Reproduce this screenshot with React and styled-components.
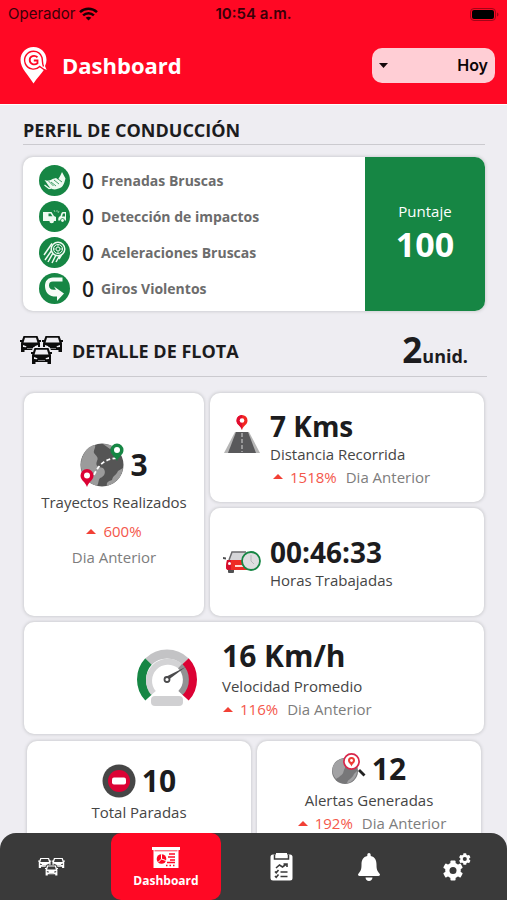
import React from "react";
import styled, { createGlobalStyle } from "styled-components";

const GlobalStyle = createGlobalStyle`
  *, *::before, *::after { box-sizing: border-box; }
  body {
    margin: 0;
    background: #eeedf2;
    color: #1c1c1e;
    font-family: "Open Sans", "Noto Sans", sans-serif;
  }
  h1, h2, p, ul { margin: 0; padding: 0; }
  ul { list-style: none; }
  svg { display: block; flex: none; }
`;

const red = "#ff0824";
const green = "#168644";
const crimson = "#dc0234";

const Page = styled.div`
  display: flex;
  flex-direction: column;
  height: 100vh;
`;

const Header = styled.header`
  flex: none;
  background: ${red};
  border-bottom: 1px solid #ffffff;
`;

const StatusBar = styled.div`
  display: grid;
  grid-template-columns: 1fr auto 1fr;
  align-items: center;
  height: 28px;
  padding: 0 8px;
  font: 400 15px/20px Inter, sans-serif;
  color: #3a0008;
`;

const Carrier = styled.span`
  display: flex;
  align-items: center;
  gap: 4px;
`;

const Clock = styled.time`
  font-weight: 600;
`;

const BatterySlot = styled.span`
  justify-self: end;
`;

const TitleBar = styled.div`
  display: flex;
  align-items: center;
  height: 76px;
  padding: 0 12px 2px 20px;
`;

const PageTitle = styled.h1`
  flex: 1;
  margin-left: 14px;
  font-size: 22px;
  line-height: 30px;
  font-weight: 700;
  color: #ffffff;
`;

const PeriodField = styled.label`
  display: flex;
  align-items: center;
  width: 123px;
  height: 35px;
  padding: 0 7px;
  border-radius: 10px;
  background: #ffced5;
`;

const PeriodSelect = styled.select`
  flex: 1;
  min-width: 0;
  height: 35px;
  padding: 0;
  border: 0;
  appearance: none;
  background: transparent;
  color: #0c0406;
  font: 600 16px/22px Inter, sans-serif;
  text-align-last: right;
`;

const Main = styled.main`
  flex: 1;
  min-height: 0;
  margin-bottom: -16px;
  padding: 10px 22px 16px 23px;
  overflow-y: auto;
  scrollbar-width: none;
`;

const SectionHead = styled.div`
  display: flex;
  align-items: center;
  height: ${(p) => (p.$tall ? 54 : 30)}px;
  margin: ${(p) => (p.$tall ? "12px -2px 16px -3px" : "0 0 12px")};
  padding-top: ${(p) => (p.$tall ? 2 : 0)}px;
  border-bottom: 1px solid #cbcacf;
`;

const SectionTitle = styled.h2`
  flex: 1;
  margin-left: ${(p) => (p.$indent ? 9 : 0)}px;
  font-size: 18px;
  line-height: 24px;
  font-weight: 700;
`;

const UnitCount = styled.p`
  margin-right: 19px;
  padding-top: 5px;
  font-size: 18px;
  line-height: 44px;
  font-weight: 700;
`;

const UnitNumber = styled.strong`
  font-size: 35px;
  font-weight: 700;
`;

const Card = styled.article`
  border-radius: 10px;
  background: #ffffff;
  box-shadow: 0 0 3px 1px #d0d0d4;
`;

const ProfileCard = styled(Card)`
  display: flex;
  overflow: hidden;
`;

const EventList = styled.ul`
  flex: 1;
  display: flex;
  flex-direction: column;
  gap: 5px;
  padding: 8px 16px 7px;
`;

const EventRow = styled.li`
  display: flex;
  align-items: center;
  height: 31px;
`;

const EventCount = styled.strong`
  width: 19px;
  margin-left: 12px;
  font-size: 21px;
  line-height: 28px;
  font-weight: 600;
`;

const EventName = styled.span`
  font-size: 14px;
  line-height: 20px;
  font-weight: 700;
  color: #6c6c6c;
`;

const Score = styled.div`
  display: flex;
  flex-direction: column;
  justify-content: center;
  align-items: center;
  width: 120px;
  background: ${green};
  color: #ffffff;
`;

const ScoreLabel = styled.span`
  font-size: 15px;
  line-height: 20px;
`;

const ScoreValue = styled.strong`
  font-size: 34px;
  line-height: 46px;
  font-weight: 700;
`;

const MetricGrid = styled.section`
  display: grid;
  grid-template-columns: 180fr 274fr;
  grid-template-rows: 109px 108px 112px;
  gap: 6px;
  margin: 0 1px;
`;

const TallCard = styled(Card)`
  grid-row: span 2;
  display: flex;
  flex-direction: column;
  align-items: center;
  gap: 4px;
  padding-top: 50px;
`;

const SideCard = styled(Card)`
  display: flex;
  align-items: center;
  gap: ${(p) => (p.$wide ? 24 : 9)}px;
  grid-column: ${(p) => (p.$wide ? "1 / -1" : "auto")};
  padding-left: ${(p) => (p.$wide ? 112 : 13)}px;
`;

const RaisedIcon = styled.div`
  align-self: flex-start;
  padding-top: 22px;
`;

const MetricText = styled.div`
  padding-top: 1px;
`;

const BottomCards = styled.section`
  display: grid;
  grid-template-columns: 1fr 1fr;
  gap: 6px;
  margin: 7px 4px 0;
`;

const SmallCard = styled(Card)`
  display: flex;
  flex-direction: column;
  align-items: center;
  min-height: 112px;
  padding-top: ${(p) => (p.$lower ? 20 : 8)}px;
`;

const IconValue = styled.div`
  display: flex;
  align-items: center;
  gap: 6px;
  min-height: 40px;
`;

const Value = styled.strong`
  display: block;
  font-size: ${(p) => (p.$small ? 28 : 30)}px;
  line-height: ${(p) => (p.$small ? 34 : 38)}px;
  font-weight: 700;
`;

const Label = styled.p`
  font-size: 15px;
  line-height: 22px;
  color: #454545;
`;

const Trend = styled.p`
  display: flex;
  flex-direction: ${(p) => (p.$stacked ? "column" : "row")};
  align-items: center;
  gap: ${(p) => (p.$stacked ? 4 : 9)}px;
  margin-top: ${(p) => (p.$stacked ? 3 : 1)}px;
  padding-left: ${(p) => p.$inset || 0}px;
  font-size: 15px;
  line-height: 22px;
  color: #7d7d7d;
`;

const Change = styled.span`
  display: flex;
  align-items: center;
  gap: 7px;
  color: #f4574b;
`;

const Nav = styled.nav`
  position: relative;
  flex: none;
  display: flex;
  height: 67px;
  padding: 0 6px 0 7px;
  border-radius: 16px 16px 0 0;
  background: #3a3a3a;
`;

const NavButton = styled.button`
  flex: ${(p) => (p.$active ? "0 0 110px" : "1 1 0")};
  display: flex;
  flex-direction: column;
  align-items: center;
  justify-content: center;
  gap: 3px;
  margin: ${(p) => (p.$active ? "0 16px" : "0")};
  padding: ${(p) => (p.$active ? 4 : 0)}px 0 0;
  border: 0;
  border-radius: 10px;
  background: ${(p) => (p.$active ? red : "transparent")};
  color: #ffffff;
  font: 700 12px/18px "Open Sans", "Noto Sans", sans-serif;
`;

const WifiIcon = () => (
  <svg width="19" height="14" viewBox="0 0 19 14" aria-hidden="true" fill="none" stroke="#180004" strokeWidth="2.5">
    <path d="M1 5.2C5.8.7 13.2.7 18 5.2" />
    <path d="M4.1 8.4c3.1-2.9 7.7-2.9 10.8 0" />
    <path d="M9.5 13.5 6.7 10.7c1.6-1.4 4-1.4 5.6 0Z" fill="#180004" stroke="none" />
  </svg>
);

const BatteryIcon = () => (
  <svg width="29" height="13" viewBox="0 0 29 13" aria-hidden="true">
    <rect x=".5" y=".5" width="25" height="12" rx="3.5" fill="none" stroke="#a10517" />
    <rect x="2" y="2" width="22" height="9" rx="2" fill="#000000" />
    <path d="M27 4.5v4c2-.8 2-3.2 0-4Z" fill="#a10517" />
  </svg>
);

const LogoIcon = () => (
  <svg width="28" height="37" viewBox="0 0 28 37" aria-hidden="true">
    <path d="M13.500 0C6 0 .5 5.600.5 13c0 8.500 8 15 13 23.500C17 31 21.500 27 24.500 22L27 24l-2-5c1-2 1.500-4 1.500-6C26.500 5.600 21 0 13.500 0Z" fill="#ffffff" />
    <path d="M23.500 19.500C22 16 22.800 14.500 22 10.500 20.800 7 17.500 4.300 13.500 4.300a8.900 8.900 0 1 0 6.300 15.200c2.500 2 4.200 3.500 7.200 4.500" fill="none" stroke={red} strokeWidth="1.400" />
    <path d="M17.500 10.300C14.500 7.800 9.700 9 9.700 13s4.800 5.700 7.800 3.200v-2.700h-3.700" fill="none" stroke={red} strokeWidth="1.800" />
  </svg>
);

const DownArrow = () => (
  <svg width="9" height="5" viewBox="0 0 9 5" aria-hidden="true">
    <path d="M0 0h9L4.500 5Z" fill="#14080a" />
  </svg>
);

const UpArrow = () => (
  <svg width="10" height="5" viewBox="0 0 10 5" aria-hidden="true">
    <path d="M0 5h10L5 0Z" fill="#f24035" />
  </svg>
);

const Disc = ({ children }) => (
  <svg width="31" height="31" viewBox="0 0 31 31" aria-hidden="true">
    <circle cx="15.500" cy="15.500" r="15.500" fill={green} />
    {children}
  </svg>
);

const BrakeIcon = () => (
  <Disc>
    <path d="M5.500 15c3 1.500 5.500.5 8-1l3.500-1 2 1.500c1.500-2.500 2.500-4 4-7.500l3.500 6.500c-1 3-1.500 7-4.500 9-3 1.500-6 2.500-9 1.500-2-1-2.500-2-7.500-9Z" fill="#effaf1" />
    <path d="m12 17 5 4m-2-6 5 4m-1-5 4 3M9.500 16l5 5" stroke={green} strokeWidth=".8" fill="none" />
    <path d="m5.500 20 4.500 3.500 2-.5" stroke="#effaf1" strokeWidth="1.300" fill="none" />
  </Disc>
);

const ImpactIcon = () => (
  <Disc>
    <path d="M4 11h8.500l2.500 4 2 1v4h-2a2.300 2.300 0 0 1-4.600 0H4Z" fill="#effaf1" />
    <path d="M9.500 12.500h2.200l1.700 2.800H9.500Z" fill={green} />
    <path d="M27 11h-3c-1.500 0-2 2-2.500 4-1.500.5-2.300 1.500-2.300 4.500h2a2.300 2.300 0 0 1 4.600 0H27Z" fill="#effaf1" />
    <path d="M26 12.500h-2l-1 3h3Z" fill={green} />
    <circle cx="12.700" cy="19.700" r="1.500" fill="#effaf1" />
    <circle cx="23.500" cy="19.500" r="1.400" fill="#effaf1" />
    <path d="m15 9 1 2m2-2v2m2-1-1 2" stroke="#8bc9a0" />
  </Disc>
);

const AccelerationIcon = () => (
  <Disc>
    <path d="M13 6.500 5 18m8-5L6 23m8-7-5 9m8-7-4 8m8-8-4 7m8-11-5 8" stroke="#effaf1" strokeWidth="1.500" fill="none" />
    <circle cx="19" cy="12" r="6.800" fill={green} stroke="#effaf1" strokeWidth="1.500" />
    <circle cx="19" cy="12" r="4.500" fill="none" stroke="#effaf1" strokeWidth="1" />
    <circle cx="19" cy="12" r="2" fill="none" stroke="#effaf1" strokeWidth="1" />
    <path d="M19 7.500v2m0 5v2M14.500 12h2m5 0h2" stroke="#effaf1" strokeWidth=".8" />
  </Disc>
);

const TurnIcon = () => (
  <Disc>
    <path d="M23.500 4.500v4H14c-3 0-4 1.500-4 4s1.500 4.300 4.500 4.300H17L15 13.500l10 7-7 7.500v-4.500h-3.500C9 23 6 18 6 13c0-5 3-8.500 8-8.500Z" fill="#f6fcf7" />
  </Disc>
);

const CarFront = ({ x, y, fill, line }) => (
  <g transform={`translate(${x} ${y})`}>
    <path d="M4 0h14l2.500 7v9h-3.500v-2H5v2H1.500V7Z" fill={fill} />
    <path d="M5.500 1.700h11L18 6.500H4Z" fill={line} />
    <path d="M.5 5h2.500M19 5h2.500" stroke={fill} strokeWidth="1.800" />
    <path d="M3.500 9 7 10.300l-.5 1-3-.4Zm15 0L15 10.300l.5 1 3-.4ZM7.500 12h7v.6h-7Z" fill={line} />
  </g>
);

const FleetIcon = ({ width, height, fill, line }) => (
  <svg width={width} height={height} viewBox="0 0 43 29" aria-hidden="true">
    <CarFront x={-0.500} y={0} fill={fill} line={line} />
    <CarFront x={21.500} y={0} fill={fill} line={line} />
    <path d="m13.500 11h16l2.500 5v12h-21V16Z" fill={line} />
    <CarFront x={10.500} y={12} fill={fill} line={line} />
  </svg>
);

const TripsIcon = () => (
  <svg width="44" height="44" viewBox="0 0 44 44" aria-hidden="true">
    <circle cx="22" cy="22" r="21.500" fill="#555555" />
    <path d="M5 9C7 5 12 2 15 2c1 3-2 5-1 8 2 3 5 4 3 8-2 5 1 6 6 7 4 4 1 9-3 10-2 2-1 5-3 8C6 40 0 30 1 20c0-4 2-8 4-11ZM43 25c-1 8-6 15-16 18-1-4 2-5 5-6 1-5 4-4 6-9ZM23 1c5 0 8 1 11 3l-4 2Z" fill="#9b9b9b" />
    <path d="M14 32c5-11 11-16 23-17" fill="none" stroke="#ffffff" strokeWidth="1.800" strokeDasharray="4 2.500" />
    <path d="M37 18c-2-5-6.500-6-6.500-11a6.500 6.500 0 0 1 13 0c0 5-4.500 6-6.500 11Z" fill={green} />
    <circle cx="37" cy="7" r="3" fill="#ffffff" />
    <path d="M7 44C5 38 .5 37.500.5 32.500a6.500 6.500 0 0 1 13 0C13.500 37.500 9 38 7 44Z" fill={crimson} />
    <circle cx="7" cy="32.500" r="3" fill="#ffffff" />
  </svg>
);

const RoadIcon = () => (
  <svg width="38" height="40" viewBox="0 0 38 40" aria-hidden="true">
    <path d="M12 17h14l11 21H1Z" fill="#b6b6b6" />
    <path d="M13 17h12l8 21H5Z" fill="#59595b" />
    <path d="M19 18v19" stroke="#d8d8d8" strokeWidth="1" strokeDasharray="4 2" />
    <path d="M19 15c-1.500-5-5.500-5-5.500-9.500a5.500 5.500 0 0 1 11 0C24.500 10 20.500 10 19 15Z" fill="#f12622" />
    <path d="M19 15c-1.500-5-5.500-5-5.500-9.500A5.500 5.500 0 0 1 19 0Z" fill="#e10c30" />
    <circle cx="19" cy="5.500" r="2.300" fill="#ffffff" />
  </svg>
);

const HoursIcon = () => (
  <svg width="38" height="24" viewBox="0 0 38 24" aria-hidden="true">
    <path d="m6 10 3-8h15v10H6Z" fill="#d5d5d8" />
    <path d="m6 10 3-8h14" fill="none" stroke="#69696c" strokeWidth="1.500" />
    <rect x="5" y="17" width="6" height="6" rx="1" fill="#505052" />
    <path d="M4 10h23v10H6c-3 0-3-2-3-4Z" fill="#ee2a24" />
    <path d="M4 10h4v10H6c-3 0-3-2-3-4Z" fill="#d60d2d" />
    <path d="M12 15h10v2H12Z" fill="#ffd9d4" />
    <circle cx="6.500" cy="13.500" r="1.500" fill="#ffffff" />
    <path d="m0 7 3 .500v2L0 9Z" fill="#505052" />
    <circle cx="28" cy="11" r="9" fill="#dedee0" stroke={green} strokeWidth="1.800" />
    <path d="M28 5v6l3 3" fill="none" stroke="#b8b8bc" strokeWidth="1" />
  </svg>
);

const GaugeIcon = () => (
  <svg width="62" height="58" viewBox="0 0 62 58" aria-hidden="true" fill="none">
    <path d="M12.600 48.500A26.500 26.500 0 0 1 12.600 12.400" stroke={green} strokeWidth="9" />
    <path d="M12.600 12.400A26.500 26.500 0 0 1 49.400 12.400" stroke="#c3c3c5" strokeWidth="9" />
    <path d="M49.400 12.400A26.500 26.500 0 0 1 49.400 48.500" stroke={crimson} strokeWidth="9" />
    <path d="M17.500 44A19 19 0 0 1 44 17" stroke="#d3d3d5" strokeWidth="6" />
    <path d="M44 17A19 19 0 0 1 44.500 44" stroke="#929294" strokeWidth="6" />
    <path d="m29.500 28 20-10-18 13.500Z" fill="#4a4a4c" />
    <circle cx="31" cy="30.500" r="2.500" fill="#ffffff" stroke="#4a4a4c" strokeWidth="1.800" />
    <rect x="15" y="47" width="32" height="10" rx="4" fill="#d0d0d2" />
  </svg>
);

const StopIcon = () => (
  <svg width="34" height="34" viewBox="0 0 34 34" aria-hidden="true">
    <circle cx="17" cy="17" r="16.500" fill="#464646" />
    <circle cx="17" cy="17" r="11" fill={crimson} />
    <rect x="10" y="13.500" width="14" height="7" rx="2" fill="#ffffff" />
  </svg>
);

const AlertsIcon = () => (
  <svg width="34" height="32" viewBox="0 0 34 32" aria-hidden="true">
    <circle cx="13" cy="18" r="13" fill="#777779" />
    <path d="M3 10c4-4 7-5 9-4-1 4 3 5 1 9-2 3-1 6-5 8-1 2-2 1-4 3-5-6-4-12-1-16Zm22 8c0 6-5 12-10 12 1-4 5-4 7-9Z" fill="#a2a2a4" />
    <path d="m27 17 5.500 5.500" stroke="#222222" strokeWidth="2.800" />
    <circle cx="19.500" cy="8.500" r="7.600" fill="#ffffff" stroke="#d8264a" strokeWidth="1.700" />
    <path d="M19.500 13.500c-.8-3-3.500-3.500-3.500-6a3.500 3.500 0 0 1 7 0c0 2.500-2.700 3-3.500 6Z" fill="#ee3b35" />
    <circle cx="19.500" cy="7.500" r="1.400" fill="#ffffff" />
  </svg>
);

const BoardIcon = () => (
  <svg width="28" height="22" viewBox="0 0 28 22" aria-hidden="true">
    <path d="M0 0h28v3H0Zm1.500 3h25v18h-25Z" fill="#ffffff" />
    <path d="M2.500 3.800h23" stroke={red} strokeWidth=".8" />
    <circle cx="9.500" cy="12" r="4.800" fill={red} />
    <path d="M9.500 12V7.200m0 4.800 4.300 1.500M9.500 12 6 15.500" stroke="#ffffff" strokeWidth="1" />
    <path d="M17 7h6m-7 3h7m-5 3h5m-8 2.500h8M14 18.500h1.500m2 0h1.500m2 0h1.500" stroke={red} strokeWidth="1.700" />
  </svg>
);

const ChecklistIcon = () => (
  <svg width="23" height="28" viewBox="0 0 23 28" aria-hidden="true" fill="none">
    <rect x=".5" y="1.500" width="22" height="26" rx="2.500" fill="#ffffff" />
    <path d="M4.500 1.500V6h14V1.500" stroke="#3a3a3a" strokeWidth="1.500" />
    <path d="M6 0h11v5H6Z" fill="#ffffff" />
    <path d="m6 15 3.500-3 3 2 4-3m-3 0h3.500v3M5 18.500l1.200 1.200L8.500 17m2 2h7M5 23l1.200 1.200 2.300-2.700m2 2h7" stroke="#3a3a3a" strokeWidth="1.600" />
  </svg>
);

const BellIcon = () => (
  <svg width="22" height="28" viewBox="0 0 22 28" aria-hidden="true">
    <path d="M11 0c1 0 1.700.8 1.700 2v1c4.300.7 5.800 4.500 5.800 8.500 0 5 .8 6.500 3.100 9.200.8 1.300.2 2.300-1.100 2.300h-19C.2 23-.4 22 .4 20.700c2.300-2.700 3.100-4.200 3.100-9.200C3.500 7.500 5 3.700 9.300 3V2C9.300.8 10 0 11 0ZM7.500 24.500h7c-.2 2.100-1.500 3.500-3.500 3.500s-3.300-1.400-3.500-3.500Z" fill="#ffffff" />
  </svg>
);

const Gear = ({ x, y, scale }) => (
  <g transform={`translate(${x} ${y}) scale(${scale})`}>
    {[0, 60, 120].map((angle) => (
      <rect key={angle} x="-2.600" y="-10" width="5.200" height="20" rx="1" transform={`rotate(${angle})`} fill="#ffffff" />
    ))}
    <circle r="5.600" fill="none" stroke="#ffffff" strokeWidth="4.400" />
    <circle r="3.500" fill="#3a3a3a" />
  </g>
);

const GearsIcon = () => (
  <svg width="28" height="28" viewBox="0 0 28 28" aria-hidden="true">
    <Gear x={10} y={17.500} scale={1} />
    <Gear x={21.800} y={6} scale={0.580} />
  </svg>
);

const events = [
  { name: "Frenadas Bruscas", count: 0, Icon: BrakeIcon },
  { name: "Detección de impactos", count: 0, Icon: ImpactIcon },
  { name: "Aceleraciones Bruscas", count: 0, Icon: AccelerationIcon },
  { name: "Giros Violentos", count: 0, Icon: TurnIcon },
];

function TrendLine({ change, stacked, inset }) {
  return (
    <Trend $stacked={stacked} $inset={inset}>
      <Change>
        <UpArrow />
        {change}
      </Change>
      <span>Dia Anterior</span>
    </Trend>
  );
}

export default function App() {
  return (
    <Page>
      <GlobalStyle />
      <Header>
        <StatusBar>
          <Carrier>
            Operador
            <WifiIcon />
          </Carrier>
          <Clock>10:54 a.m.</Clock>
          <BatterySlot>
            <BatteryIcon />
          </BatterySlot>
        </StatusBar>
        <TitleBar>
          <LogoIcon />
          <PageTitle>Dashboard</PageTitle>
          <PeriodField>
            <DownArrow />
            <PeriodSelect aria-label="Periodo" defaultValue="hoy">
              <option value="hoy">Hoy</option>
            </PeriodSelect>
          </PeriodField>
        </TitleBar>
      </Header>

      <Main>
        <SectionHead>
          <SectionTitle>PERFIL DE CONDUCCIÓN</SectionTitle>
        </SectionHead>
        <ProfileCard>
          <EventList>
            {events.map(({ name, count, Icon }) => (
              <EventRow key={name}>
                <Icon />
                <EventCount>{count}</EventCount>
                <EventName>{name}</EventName>
              </EventRow>
            ))}
          </EventList>
          <Score>
            <ScoreLabel>Puntaje</ScoreLabel>
            <ScoreValue>100</ScoreValue>
          </Score>
        </ProfileCard>

        <SectionHead $tall>
          <FleetIcon width={43} height={29} fill="#0c0c0c" line="#eeedf2" />
          <SectionTitle $indent>DETALLE DE FLOTA</SectionTitle>
          <UnitCount>
            <UnitNumber>2</UnitNumber>unid.
          </UnitCount>
        </SectionHead>

        <MetricGrid>
          <TallCard>
            <IconValue>
              <TripsIcon />
              <Value>3</Value>
            </IconValue>
            <Label>Trayectos Realizados</Label>
            <TrendLine change="600%" stacked />
          </TallCard>
          <SideCard>
            <RaisedIcon>
              <RoadIcon />
            </RaisedIcon>
            <MetricText>
              <Value $small>7 Kms</Value>
              <Label>Distancia Recorrida</Label>
              <TrendLine change="1518%" inset={3} />
            </MetricText>
          </SideCard>
          <SideCard>
            <HoursIcon />
            <MetricText>
              <Value $small>00:46:33</Value>
              <Label>Horas Trabajadas</Label>
            </MetricText>
          </SideCard>
          <SideCard $wide>
            <GaugeIcon />
            <MetricText>
              <Value>16 Km/h</Value>
              <Label>Velocidad Promedio</Label>
              <TrendLine change="116%" inset={1} />
            </MetricText>
          </SideCard>
        </MetricGrid>

        <BottomCards>
          <SmallCard $lower>
            <IconValue>
              <StopIcon />
              <Value>10</Value>
            </IconValue>
            <Label>Total Paradas</Label>
          </SmallCard>
          <SmallCard>
            <IconValue>
              <AlertsIcon />
              <Value>12</Value>
            </IconValue>
            <Label>Alertas Generadas</Label>
            <TrendLine change="192%" inset={6} />
          </SmallCard>
        </BottomCards>
      </Main>

      <Nav aria-label="Principal">
        <NavButton type="button" aria-label="Flota">
          <FleetIcon width={27} height={18} fill="#ffffff" line="#3a3a3a" />
        </NavButton>
        <NavButton type="button" $active aria-current="page">
          <BoardIcon />
          Dashboard
        </NavButton>
        <NavButton type="button" aria-label="Reportes">
          <ChecklistIcon />
        </NavButton>
        <NavButton type="button" aria-label="Alertas">
          <BellIcon />
        </NavButton>
        <NavButton type="button" aria-label="Ajustes">
          <GearsIcon />
        </NavButton>
      </Nav>
    </Page>
  );
}
